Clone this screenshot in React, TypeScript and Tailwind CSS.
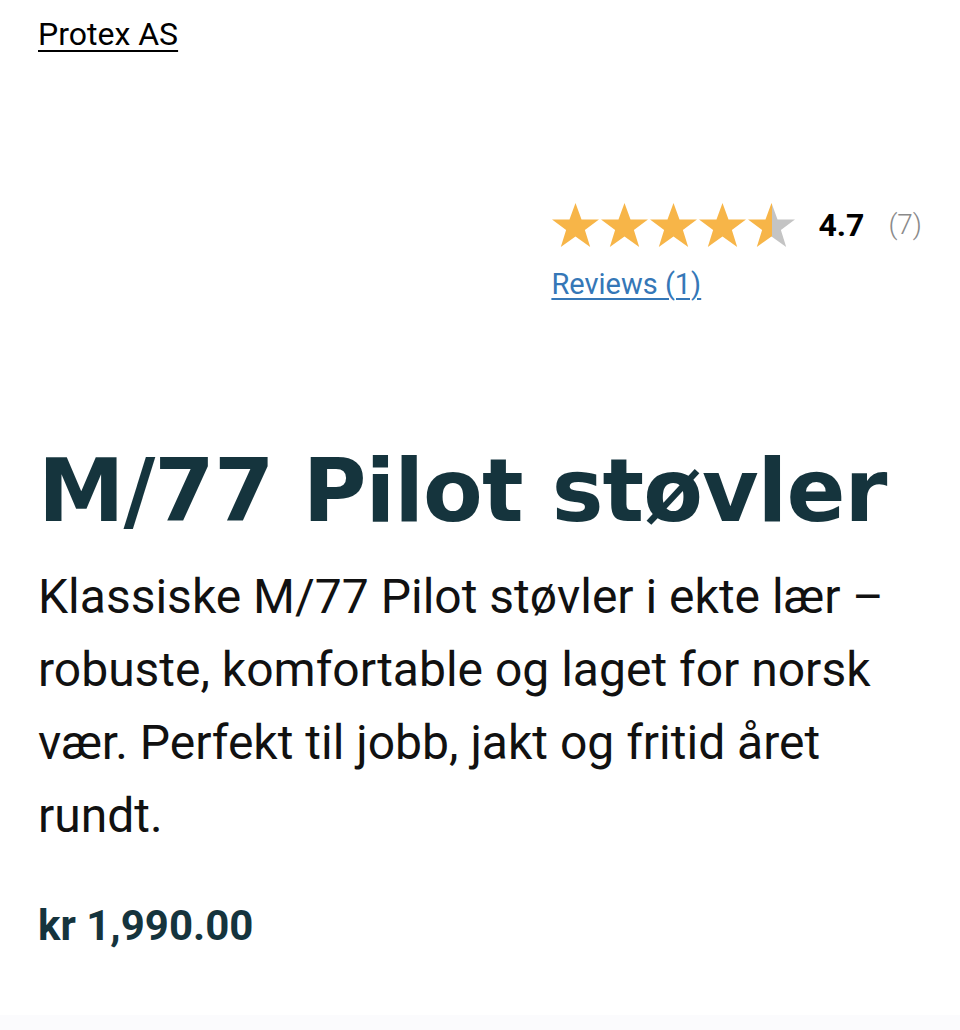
import { useId } from "react";

function Star({ fill }: { fill: number }) {
  const id = useId();
  return (
    <svg viewBox="0 0 24 24" className="w-[49px] h-[49px]">
      <defs>
        <linearGradient id={id}>
          <stop offset={`${fill * 100}%`} stopColor="#f7b548" />
          <stop offset={`${fill * 100}%`} stopColor="#c4c4c4" />
        </linearGradient>
      </defs>
      <path
        d="M12 1.5l2.95 8.1h8.55l-6.9 5.1 2.6 8.3L12 17.9l-7.2 5.1 2.6-8.3-6.9-5.1h8.55z"
        fill={`url(#${id})`}
      />
    </svg>
  );
}

export default function App() {
  return (
    <div className="min-h-[1030px] flex flex-col bg-white font-['Roboto',sans-serif]">
      <div className="flex-1 px-[38px]">
        {/* vendor */}
        <div className="pt-[14px]">
          <a href="#" className="text-[32px] leading-[40px] text-black underline underline-offset-[5px] decoration-[2px]">
            Protex AS
          </a>
        </div>

        {/* rating */}
        <div className="flex justify-end mt-[146px]">
          <div className="flex flex-col items-start">
            <div className="flex items-center">
              <div className="flex">
                <Star fill={1} />
                <Star fill={1} />
                <Star fill={1} />
                <Star fill={1} />
                <Star fill={0.5} />
              </div>
              <span className="ml-[22px] text-[32px] font-bold text-black">4.7</span>
              <span className="ml-[24px] text-[28px] font-light text-[#8a8a8a]">(7)</span>
            </div>
            <a href="#" className="mt-[17px] text-[29px] leading-[36px] text-[#3577b7] underline underline-offset-[4px] decoration-[2px]">
              Reviews (1)
            </a>
          </div>
        </div>

        {/* title */}
        <h1 className="mt-[139px] text-[87px] leading-[100px] font-bold text-[#15343d] tracking-[-1px] font-['DejaVu_Sans',sans-serif]">
          M/77 Pilot støvler
        </h1>
        <p className="mt-[19px] text-[48px] leading-[73px] text-[#111]">
          Klassiske M/77 Pilot støvler i ekte lær – robuste, komfortable og laget for norsk vær. Perfekt til jobb, jakt og fritid året rundt.
        </p>
        <div className="mt-[49px] text-[42px] leading-[50px] font-bold text-[#15343d]">
          kr 1,990.00
        </div>
      </div>
      <div className="h-[15px] bg-[#fbfbfd]" />
    </div>
  );
}
